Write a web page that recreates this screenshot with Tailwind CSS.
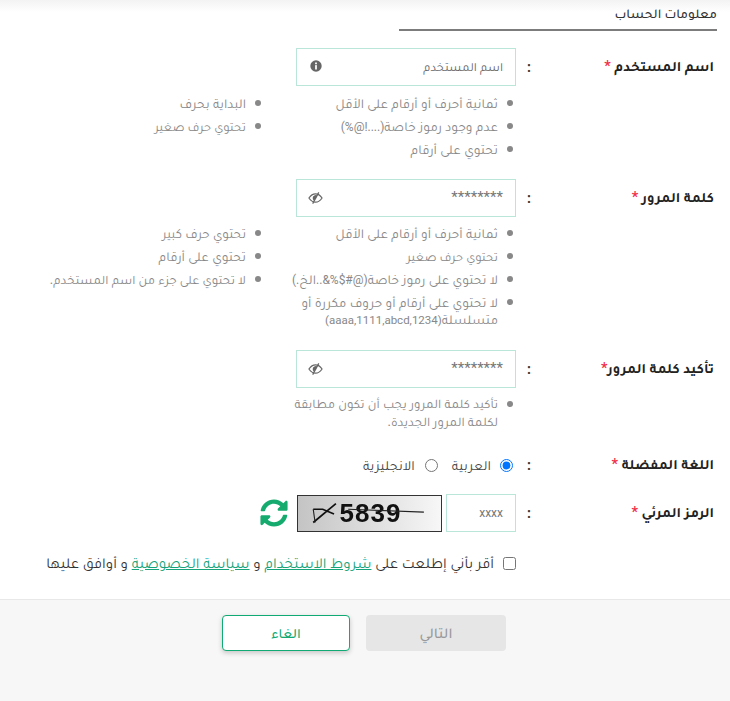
<!DOCTYPE html>
<html lang="ar" dir="rtl">
<head>
<meta charset="utf-8">
<script src="https://cdn.jsdelivr.net/npm/@tailwindcss/browser@4"></script>
</head>
<body class="bg-white font-['Roboto','Tajawal','Cairo','Droid_Arabic_Kufi','Noto_Kufi_Arabic','Noto_Naskh_Arabic',sans-serif] h-[701px] w-[730px] overflow-hidden flex flex-col text-[#333]">
<main class="h-[599px] bg-gradient-to-b from-[#f3f3f3] to-white to-[12px] bg-no-repeat pr-[13px]">
  <h2 class="w-[318px] h-[31px] border-b-2 border-[#7c7c7c] text-[13.5px] leading-[26px] text-[#333] font-medium">معلومات الحساب</h2>

  <section class="flex mt-[17px] h-[38px] items-center">
    <label class="w-[186px] pr-[3px] text-[14.5px] font-semibold text-[#222]">اسم المستخدم <span class="text-[#f0304a]">*</span></label>
    <span class="w-[15px] text-[14px] font-bold">:</span>
    <div class="w-[220px] h-[38px] border border-[#b9e6d8] flex items-center justify-between pr-[12px] pl-[12px] text-[12.5px] text-[#666]">
      <span>اسم المستخدم</span>
      <svg class="w-[14px] h-[14px] mb-[2px]" viewBox="0 0 16 16"><circle cx="8" cy="8" r="6.5" fill="#666"/><rect x="7" y="7" width="2" height="5" fill="#fff"/><rect x="7" y="4" width="2" height="2" fill="#fff"/></svg>
    </div>
  </section>
  <div class="flex mr-[204px] mt-[6px] text-[13.5px] leading-[23px] text-[#888]">
    <ul class="w-[252px] list-none">
      <li class="flex gap-[9px] h-[23px]"><i class="w-[6px] h-[6px] mt-[8px] rounded-full bg-[#888] shrink-0"></i>ثمانية أحرف أو أرقام على الأقل</li>
      <li class="flex gap-[9px] h-[23px]"><i class="w-[6px] h-[6px] mt-[8px] rounded-full bg-[#888] shrink-0"></i><span>عدم وجود رموز خاصة<span class="text-[12px] leading-none">(....!@%)</span></span></li>
      <li class="flex gap-[9px] h-[23px]"><i class="w-[6px] h-[6px] mt-[8px] rounded-full bg-[#888] shrink-0"></i>تحتوي على أرقام</li>
    </ul>
    <ul class="list-none">
      <li class="flex gap-[9px] h-[23px]"><i class="w-[6px] h-[6px] mt-[8px] rounded-full bg-[#888] shrink-0"></i>البداية بحرف</li>
      <li class="flex gap-[9px] h-[23px] text-[12.7px]"><i class="w-[6px] h-[6px] mt-[8px] rounded-full bg-[#888] shrink-0"></i>تحتوي حرف صغير</li>
    </ul>
  </div>

  <section class="flex mt-[18px] h-[38px] items-center">
    <label class="w-[186px] pr-[3px] text-[14.5px] font-semibold text-[#222]">كلمة المرور <span class="text-[#f0304a]">*</span></label>
    <span class="w-[15px] text-[14px] font-bold">:</span>
    <div class="w-[220px] h-[38px] border border-[#b9e6d8] flex items-center justify-between pr-[12px] pl-[11px] text-[15px] text-[#777]">
      <span class="mb-[2px]">********</span>
      <svg class="w-[15px] h-[14px]" viewBox="0 0 16 14"><path d="M1 7c2-3 4.500-4.500 7-4.500S13 4 15 7c-2 3-4.500 4.500-7 4.500S3 10 1 7Z" fill="none" stroke="#666" stroke-width="1.300"/><path d="M5 7a3.200 3.200 0 0 1 5-2.600L6.500 10A3.200 3.200 0 0 1 5 7Z" fill="#666"/><path d="M11.500 1 5 13" stroke="#666" stroke-width="1.300"/></svg>
    </div>
  </section>
  <div class="flex mr-[204px] mt-[5px] text-[13.5px] leading-[23px] text-[#888]">
    <ul class="w-[252px] list-none">
      <li class="flex gap-[9px] h-[23px]"><i class="w-[6px] h-[6px] mt-[8px] rounded-full bg-[#888] shrink-0"></i>ثمانية أحرف أو أرقام على الأقل</li>
      <li class="flex gap-[9px] h-[23px] text-[12.7px]"><i class="w-[6px] h-[6px] mt-[8px] rounded-full bg-[#888] shrink-0"></i>تحتوي حرف صغير</li>
      <li class="flex gap-[9px] h-[23px]"><i class="w-[6px] h-[6px] mt-[8px] rounded-full bg-[#888] shrink-0"></i><span>لا تحتوي على رموز خاصة<span class="text-[12px] leading-none">(@#$%&amp;..</span>الخ<span class="text-[12px] leading-none">.)</span></span></li>
      <li class="flex gap-[9px] h-[37px] leading-[17px] pt-[3px]"><i class="w-[6px] h-[6px] mt-[5px] rounded-full bg-[#888] shrink-0"></i><span class="w-[208px]">لا تحتوي على أرقام أو حروف مكررة أو متسلسلة<span class="text-[11.5px] leading-none">(aaaa,1111,abcd,1234)</span></span></li>
    </ul>
    <ul class="list-none">
      <li class="flex gap-[9px] h-[23px] text-[13.2px]"><i class="w-[6px] h-[6px] mt-[8px] rounded-full bg-[#888] shrink-0"></i>تحتوي حرف كبير</li>
      <li class="flex gap-[9px] h-[23px]"><i class="w-[6px] h-[6px] mt-[8px] rounded-full bg-[#888] shrink-0"></i>تحتوي على أرقام</li>
      <li class="flex gap-[9px] h-[23px] text-[12.9px]"><i class="w-[6px] h-[6px] mt-[8px] rounded-full bg-[#888] shrink-0"></i>لا تحتوي على جزء من اسم المستخدم.</li>
    </ul>
  </div>

  <section class="flex mt-[22px] h-[38px] items-center">
    <label class="w-[186px] pr-[3px] text-[14.5px] font-semibold text-[#222]">تأكيد كلمة المرور<span class="text-[#f0304a]">*</span></label>
    <span class="w-[15px] text-[14px] font-bold">:</span>
    <div class="w-[220px] h-[38px] border border-[#b9e6d8] flex items-center justify-between pr-[12px] pl-[11px] text-[15px] text-[#777]">
      <span class="mb-[2px]">********</span>
      <svg class="w-[15px] h-[14px]" viewBox="0 0 16 14"><path d="M1 7c2-3 4.500-4.500 7-4.500S13 4 15 7c-2 3-4.500 4.500-7 4.500S3 10 1 7Z" fill="none" stroke="#666" stroke-width="1.300"/><path d="M5 7a3.200 3.200 0 0 1 5-2.600L6.500 10A3.200 3.200 0 0 1 5 7Z" fill="#666"/><path d="M11.500 1 5 13" stroke="#666" stroke-width="1.300"/></svg>
    </div>
  </section>
  <ul class="list-none mr-[204px] mt-[7px] text-[13px] leading-[18px] text-[#888]">
    <li class="flex gap-[9px]"><i class="w-[6px] h-[6px] mt-[6px] rounded-full bg-[#888] shrink-0"></i><span class="w-[210px]">تأكيد كلمة المرور يجب أن تكون مطابقة لكلمة المرور الجديدة.</span></li>
  </ul>

  <section class="flex mt-[23px] h-[22px] items-center">
    <label class="w-[186px] pr-[3px] text-[14.5px] font-semibold text-[#222]">اللغة المفضلة <span class="text-[#f0304a]">*</span></label>
    <span class="w-[15px] text-[14px] font-bold">:</span>
    <div class="flex items-center text-[14px] text-[#444]">
      <input type="radio" name="lang" checked class="w-[13px] h-[13px] accent-[#0075ff] mr-[3px] ml-[9px]" aria-label="العربية">
      <span>العربية</span>
      <input type="radio" name="lang" class="w-[13px] h-[13px] mr-[14px] ml-[10px]" aria-label="الانجليزية">
      <span>الانجليزية</span>
    </div>
  </section>

  <section class="flex mt-[18px] h-[38px] items-center">
    <label class="w-[186px] pr-[3px] text-[14.5px] font-semibold text-[#222]">الرمز المرئي <span class="text-[#f0304a]">*</span></label>
    <span class="w-[15px] text-[14px] font-bold">:</span>
    <div class="w-[70px] h-[38px] border border-[#b9e6d8] flex items-center px-[12px] text-[12px] text-[#777]">xxxx</div>
    <div dir="ltr" class="relative w-[145px] h-[37px] mr-[4px] border border-[#333] bg-gradient-to-l from-[#f7f7f7] to-[#c4c4c4] flex items-center justify-center overflow-hidden">
      <span class="font-['Liberation_Sans'] font-bold text-[26px] tracking-[1px] text-[#111] ml-[2px] blur-[0.5px]">5839</span>
      <svg class="absolute inset-0 w-full h-full" viewBox="0 0 145 37"><path d="M13 14h10l12 5M37 8 13 28" fill="none" stroke="#111" stroke-width="1.800"/><path d="M13 14l2 14M50 14l80 3" fill="none" stroke="#222" stroke-width="1.200"/></svg>
    </div>
    <svg class="w-[28px] h-[28px] mr-[9px]" viewBox="0 0 512 512"><path fill="#16ab6e" d="M370.700 133.300C339.500 104 298.900 88 255.800 88c-77.500.1-144.300 53.200-162.800 126.900-1.300 5.400-6.100 9.200-11.700 9.200H24.100c-7.500 0-13.200-6.800-11.800-14.200C33.900 94.900 134.800 8 256 8c66.400 0 126.800 26.100 171.300 68.700L463 41c15.100-15.100 41-4.400 41 17V192c0 13.300-10.700 24-24 24H345.900c-21.400 0-32.100-25.900-17-41l41.800-41.700zM32 296h134.100c21.400 0 32.100 25.900 17 41l-41.800 41.800c31.300 29.300 71.800 45.300 114.900 45.200 77.400-.1 144.300-53.100 162.800-126.800 1.300-5.400 6.100-9.200 11.700-9.200h57.300c7.500 0 13.200 6.800 11.800 14.200C478.100 417.100 377.200 504 256 504c-66.400 0-126.800-26.100-171.300-68.700L49 471c-15.100 15.100-41 4.400-41-17V320c0-13.300 10.700-24 24-24z"/></svg>
  </section>

  <div class="flex items-center mt-[20px] mr-[201px] text-[15px] text-[#333]">
    <input type="checkbox" class="w-[13px] h-[13px] ml-[9px]" aria-label="موافقة">
    <p>أقر بأني إطلعت على <a class="underline text-[#16a37a]">شروط الاستخدام</a> و <a class="underline text-[#16a37a]">سياسة الخصوصية</a> و أوافق عليها</p>
  </div>
</main>
<footer class="flex-1 bg-[#f7f7f7] border-t border-[#e8e8e8] flex gap-[16px] pt-[15px] pr-[224px]">
  <button class="w-[140px] h-[36px] rounded-[4px] bg-[#e6e6e6] text-[#999] text-[15px] font-medium">التالي</button>
  <button class="w-[128px] h-[36px] rounded-[4px] bg-white border border-[#10ab74] text-[#10ab74] text-[14px] font-medium shadow-[0_2px_5px_rgba(0,0,0,0.2)]">الغاء</button>
</footer>
</body>
</html>
